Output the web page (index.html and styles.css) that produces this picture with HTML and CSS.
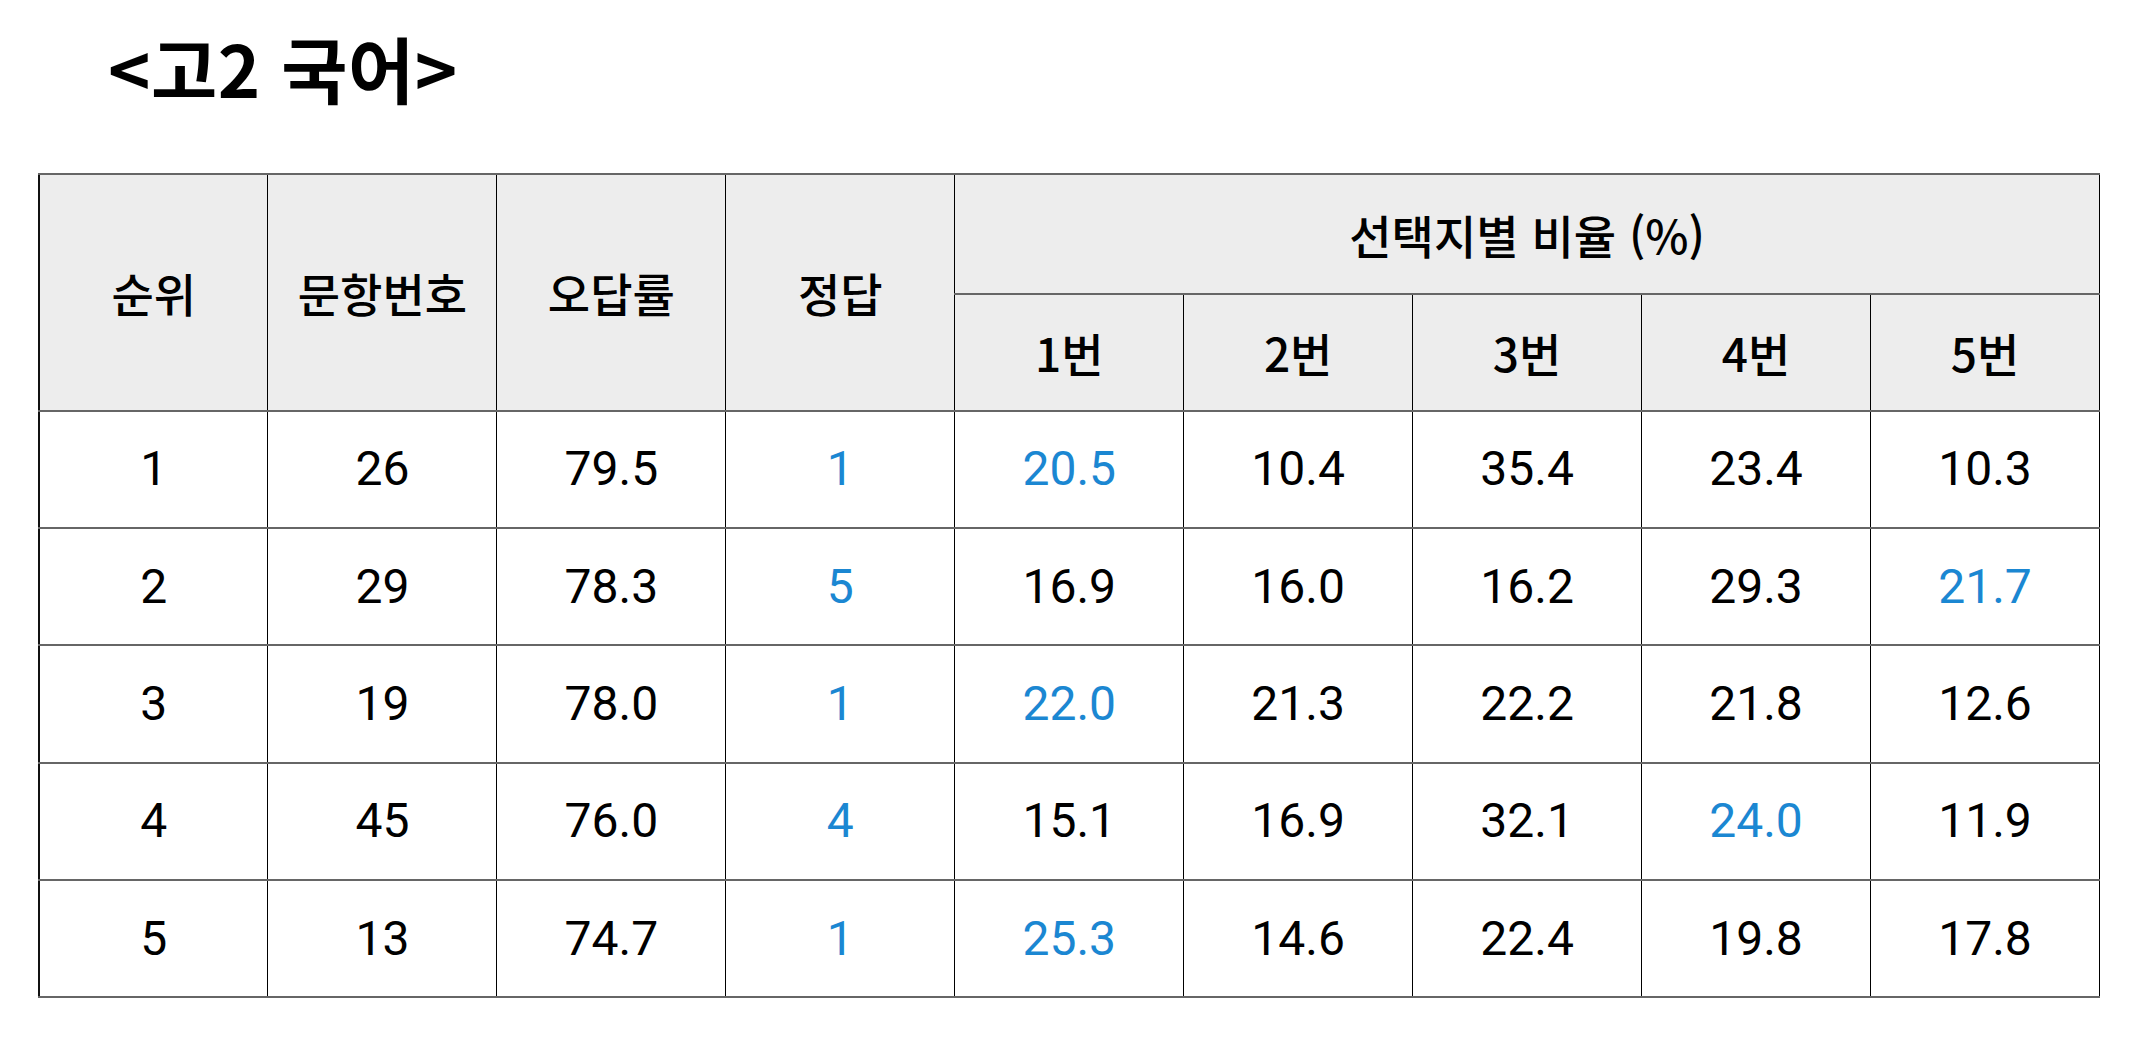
FILE: index.html
```html
<!DOCTYPE html>
<html lang="ko">
<head>
<meta charset="utf-8">
<title>고2 국어</title>
<link rel="stylesheet" href="styles.css">
</head>
<body>
<main class="page">
  <h1 class="title">&lt;고2 국어&gt;</h1>
  <table class="rank-table">
    <colgroup>
      <col><col><col><col><col><col><col><col><col>
    </colgroup>
    <thead>
      <tr class="head-row head-top">
        <th rowspan="2">순위</th>
        <th rowspan="2">문항번호</th>
        <th rowspan="2">오답률</th>
        <th rowspan="2">정답</th>
        <th colspan="5">선택지별 비율 (%)</th>
      </tr>
      <tr class="head-row">
        <th>1번</th>
        <th>2번</th>
        <th>3번</th>
        <th>4번</th>
        <th>5번</th>
      </tr>
    </thead>
    <tbody>
      <tr class="data-row">
        <td>1</td><td>26</td><td>79.5</td><td class="hl">1</td>
        <td class="hl">20.5</td><td>10.4</td><td>35.4</td><td>23.4</td><td>10.3</td>
      </tr>
      <tr class="data-row">
        <td>2</td><td>29</td><td>78.3</td><td class="hl">5</td>
        <td>16.9</td><td>16.0</td><td>16.2</td><td>29.3</td><td class="hl">21.7</td>
      </tr>
      <tr class="data-row">
        <td>3</td><td>19</td><td>78.0</td><td class="hl">1</td>
        <td class="hl">22.0</td><td>21.3</td><td>22.2</td><td>21.8</td><td>12.6</td>
      </tr>
      <tr class="data-row">
        <td>4</td><td>45</td><td>76.0</td><td class="hl">4</td>
        <td>15.1</td><td>16.9</td><td>32.1</td><td class="hl">24.0</td><td>11.9</td>
      </tr>
      <tr class="data-row">
        <td>5</td><td>13</td><td>74.7</td><td class="hl">1</td>
        <td class="hl">25.3</td><td>14.6</td><td>22.4</td><td>19.8</td><td>17.8</td>
      </tr>
    </tbody>
  </table>
</main>
</body>
</html>
```

FILE: styles.css
```css
html, body {
  margin: 0;
  padding: 0;
  background: #ffffff;
}

.page {
  padding: 31px 0 0 38px;
  font-family: "Noto Sans CJK KR", "Noto Sans", sans-serif;
  color: #000;
}

.title {
  margin: 0 0 70px 70px;
  font-size: 72px;
  line-height: 72px;
  font-weight: 700;
  letter-spacing: 0.5px;
}

.rank-table {
  width: 2062px;
  table-layout: fixed;
  border-collapse: collapse;
  border-top: 2px solid #222;
  border-left: 2px solid #111;
  border-right: 1px solid #000;
  border-bottom: 2px solid #666;
}

.rank-table th,
.rank-table td {
  border-left: 1px solid #000;
  border-right: 1px solid #000;
  border-top: 2px solid #666;
  border-bottom: 2px solid #666;
  padding: 0;
  text-align: center;
  vertical-align: middle;
}

.rank-table th {
  background: #ededed;
  font-family: "Noto Sans CJK KR", sans-serif;
  font-weight: 500;
  font-size: 46px;
  line-height: 1;
}

.head-row {
  height: 116.5px;
}

.head-top {
  height: 120px;
}

.data-row {
  height: 117.4px;
}

.rank-table td {
  font-family: Roboto, "Noto Sans CJK KR", sans-serif;
  font-size: 48px;
  font-weight: 400;
  line-height: 1;
}

.rank-table td.hl {
  color: #1b87d2;
}
```
